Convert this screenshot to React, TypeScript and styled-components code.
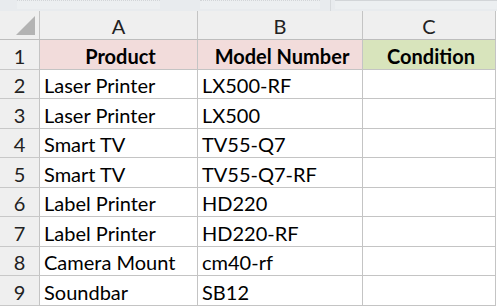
import React from 'react';
import styled, { createGlobalStyle } from 'styled-components';

const GlobalStyle = createGlobalStyle`
  html, body {
    margin: 0;
    padding: 0;
    background: #ffffff;
  }
  body {
    font-family: Lato, 'Open Sans', sans-serif;
  }
`;

const Page = styled.div`
  width: 497px;
  height: 307px;
  overflow: hidden;
  background: #ffffff;
`;

const FormulaStrip = styled.div`
  height: 11px;
  background: #e8ebee;
  display: flex;
  align-items: flex-start;
`;

const StripField = styled.div<{ $w: number; $left: number; $dotted?: boolean }>`
  margin-left: ${(p) => p.$left}px;
  width: ${(p) => p.$w}px;
  height: 8px;
  border-top: 1px ${(p) => (p.$dotted ? 'dotted' : 'solid')} #d2d5d8;
  background: #eceff1;
`;

const StripDivider = styled.div`
  margin-left: 10px;
  width: 1px;
  height: 11px;
  background: #d6d9dc;
`;

const Sheet = styled.div`
  display: grid;
  grid-template-columns: 40px 158px 165px 133px;
  grid-template-rows: 29px 30px 29px 30px 29px 30px 29px 30px 29px 30px;
`;

const HeaderCell = styled.div`
  background: #efefef;
  border-right: 1px solid #c4c4c4;
  border-bottom: 1px solid #bdbdbd;
  display: flex;
  align-items: center;
  justify-content: center;
  font-size: 20px;
  color: #222222;
  padding-top: 2px;
  box-sizing: border-box;
`;

const Corner = styled(HeaderCell)`
  position: relative;
`;

const CornerTriangle = styled.div`
  position: absolute;
  right: 4px;
  bottom: 4px;
  width: 0;
  height: 0;
  border-left: 19px solid transparent;
  border-bottom: 19px solid #b3b3b3;
`;

const RowNumber = styled.div`
  background: #efefef;
  border-right: 1px solid #c4c4c4;
  border-bottom: 1px solid #c8c8c8;
  display: flex;
  align-items: center;
  justify-content: center;
  font-size: 20px;
  color: #222222;
  padding-top: 2px;
  box-sizing: border-box;
`;

const Cell = styled.div<{ $bg?: string; $bold?: boolean }>`
  background: ${(p) => p.$bg ?? '#ffffff'};
  border-right: 1px solid #c4c4c4;
  border-bottom: 1px solid #c4c4c4;
  display: flex;
  align-items: center;
  justify-content: ${(p) => (p.$bold ? 'center' : 'flex-start')};
  padding: 2px 0 0 4px;
  font-size: 20px;
  font-weight: ${(p) => (p.$bold ? 700 : 400)};
  color: #000000;
  white-space: nowrap;
  overflow: hidden;
  box-sizing: border-box;
`;

const ROWS: { product: string; model: string }[] = [
  { product: 'Laser Printer', model: 'LX500-RF' },
  { product: 'Laser Printer', model: 'LX500' },
  { product: 'Smart TV', model: 'TV55-Q7' },
  { product: 'Smart TV', model: 'TV55-Q7-RF' },
  { product: 'Label Printer', model: 'HD220' },
  { product: 'Label Printer', model: 'HD220-RF' },
  { product: 'Camera Mount', model: 'cm40-rf' },
  { product: 'Soundbar', model: 'SB12' },
];

export default function App(): JSX.Element {
  return (
    <Page>
      <GlobalStyle />
      <FormulaStrip>
        <StripField $left={17} $w={143} $dotted />
        <StripField $left={40} $w={120} $dotted />
        <StripDivider />
        <StripField $left={4} $w={162} />
      </FormulaStrip>
      <Sheet>
        <Corner>
          <CornerTriangle />
        </Corner>
        <HeaderCell>A</HeaderCell>
        <HeaderCell>B</HeaderCell>
        <HeaderCell>C</HeaderCell>

        <RowNumber>1</RowNumber>
        <Cell $bg='#f2dcdb' $bold>Product</Cell>
        <Cell $bg='#f2dcdb' $bold>Model Number</Cell>
        <Cell $bg='#d8e4bc' $bold>Condition</Cell>

        {ROWS.map((row, i) => (
          <React.Fragment key={i}>
            <RowNumber>{i + 2}</RowNumber>
            <Cell>{row.product}</Cell>
            <Cell>{row.model}</Cell>
            <Cell />
          </React.Fragment>
        ))}
      </Sheet>
    </Page>
  );
}
